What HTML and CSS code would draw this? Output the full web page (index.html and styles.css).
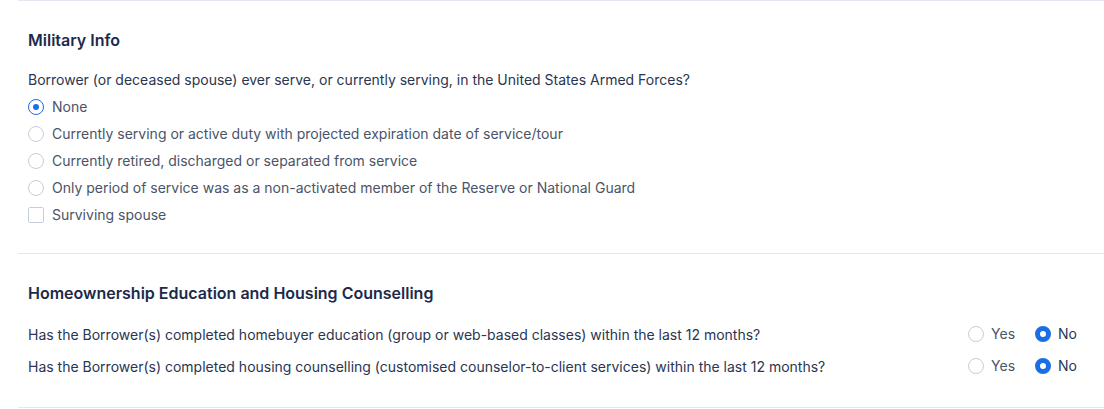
FILE: index.html
```html
<!DOCTYPE html>
<html>
<head>
<meta charset="utf-8">
<link rel="stylesheet" href="styles.css">
</head>
<body>
<div class="page">
  <section class="section military">
    <h2 class="title">Military Info</h2>
    <p class="question">Borrower (or deceased spouse) ever serve, or currently serving, in the United States Armed Forces?</p>
    <ul class="options">
      <li class="option"><span class="radio checked"></span><span class="label">None</span></li>
      <li class="option"><span class="radio"></span><span class="label">Currently serving or active duty with projected expiration date of service/tour</span></li>
      <li class="option"><span class="radio"></span><span class="label">Currently retired, discharged or separated from service</span></li>
      <li class="option"><span class="radio"></span><span class="label">Only period of service was as a non-activated member of the Reserve or National Guard</span></li>
      <li class="option"><span class="checkbox"></span><span class="label">Surviving spouse</span></li>
    </ul>
  </section>
  <section class="section counselling">
    <h2 class="title">Homeownership Education and Housing Counselling</h2>
    <div class="qrow">
      <span class="qtext">Has the Borrower(s) completed homebuyer education (group or web-based classes) within the last 12 months?</span>
      <span class="choices">
        <span class="choice"><span class="radio"></span><span class="label">Yes</span></span>
        <span class="choice"><span class="radio on"></span><span class="label dark">No</span></span>
      </span>
    </div>
    <div class="qrow">
      <span class="qtext">Has the Borrower(s) completed housing counselling (customised counselor-to-client services) within the last 12 months?</span>
      <span class="choices">
        <span class="choice"><span class="radio"></span><span class="label">Yes</span></span>
        <span class="choice"><span class="radio on"></span><span class="label dark">No</span></span>
      </span>
    </div>
  </section>
</div>
</body>
</html>
```
FILE: styles.css
```css
* { box-sizing: border-box; }
html, body { margin: 0; padding: 0; background: #fff; }
body {
  font-family: Inter, "Noto Sans", sans-serif;
  font-size: 14px;
  color: #2a3552;
}
.page {
  margin-left: 18px;
  border-top: 1px solid #e3e8f0;
}
.section {
  padding: 0 0 0 10px;
  border-bottom: 1px solid #e3e8f0;
}
.title {
  margin: 0;
  font-size: 16px;
  font-weight: 600;
  color: #1c2a4a;
  line-height: 20px;
}
.military { padding-top: 29px; padding-bottom: 28px; }
.military .question {
  margin: 20px 0 0;
  line-height: 20px;
  color: #2a3552;
}
.options {
  list-style: none;
  margin: 7px 0 0;
  padding: 0;
  display: flex;
  flex-direction: column;
  gap: 7px;
}
.option {
  display: flex;
  align-items: center;
  gap: 8px;
  height: 20px;
}
.label { color: #4a5468; line-height: 20px; }
.label.dark { color: #2a3552; }
.radio {
  width: 16px;
  height: 16px;
  border-radius: 50%;
  border: 1px solid #c6cedb;
  background: #fff;
  flex: none;
  position: relative;
}
.radio.checked { border-color: #1a6ee8; }
.radio.checked::after {
  content: "";
  position: absolute;
  left: 4px; top: 4px;
  width: 6px; height: 6px;
  border-radius: 50%;
  background: #1a6ee8;
}
.radio.on {
  border: 5px solid #1a6ee8;
}
.checkbox {
  width: 16px;
  height: 16px;
  border-radius: 2px;
  border: 1px solid #c6cedb;
  flex: none;
}
.counselling { padding-top: 29px; padding-bottom: 31px; }
.qrow {
  display: flex;
  align-items: center;
  justify-content: space-between;
  padding-right: 27px;
  height: 20px;
}
.counselling .title + .qrow { margin-top: 21px; }
.qrow + .qrow { margin-top: 12px; }
.qtext { color: #2a3552; }
.choices { display: flex; gap: 20px; }
.choice { display: flex; align-items: center; gap: 7px; }
```
